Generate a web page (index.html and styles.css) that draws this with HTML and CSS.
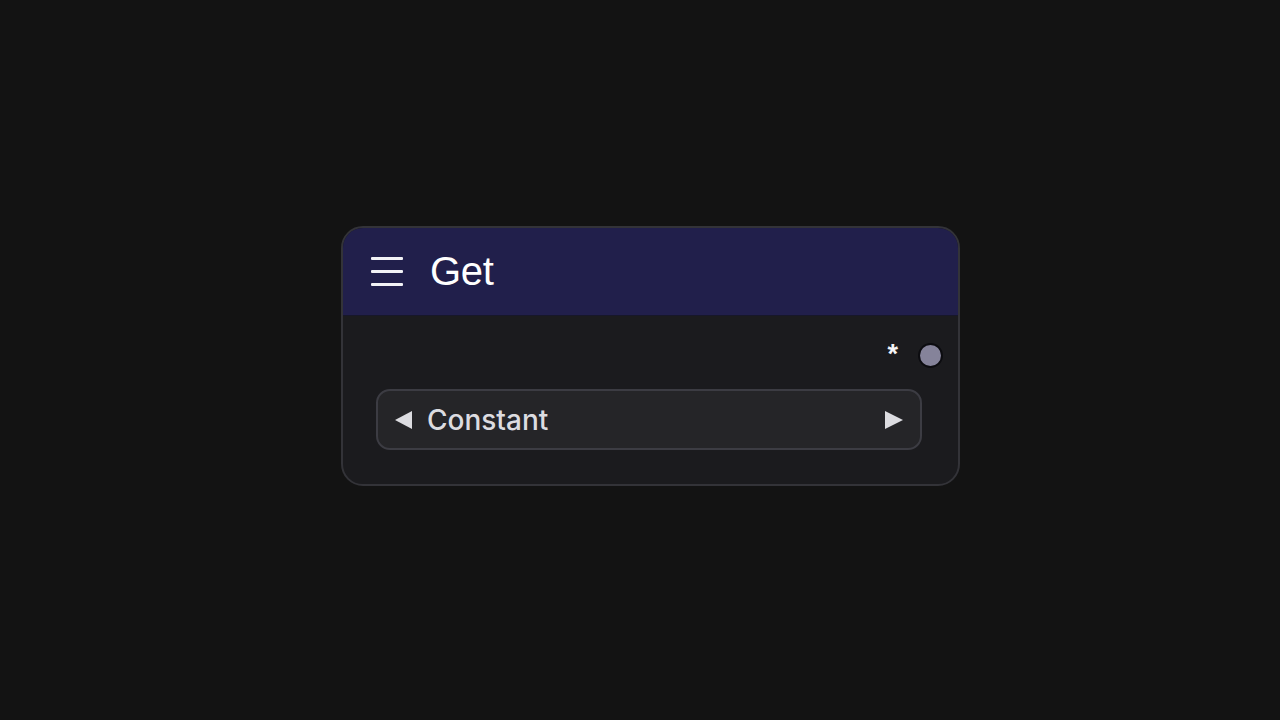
FILE: index.html
```html
<!DOCTYPE html>
<html lang="en">
<head>
  <meta charset="UTF-8">
  <meta name="viewport" content="width=device-width, initial-scale=1.0">
  <title>Get Node</title>
  <link rel="stylesheet" href="styles.css">
</head>
<body>
  <div class="node">
    <div class="node-header">
      <div class="menu-icon">
        <span></span>
        <span></span>
        <span></span>
      </div>
      <h1>Get</h1>
    </div>
    <div class="node-body">
      <div class="output-row">
        <span class="output-label">*</span>
        <span class="socket"></span>
      </div>
      <div class="select">
        <span class="arrow arrow-left"></span>
        <span class="select-value">Constant</span>
        <span class="arrow arrow-right"></span>
      </div>
    </div>
  </div>
</body>
</html>
```

FILE: styles.css
```css
body {
  font-family: "Liberation Sans", Arial, sans-serif;
  margin: 0;
  padding: 226px 0 0 341px;
  background-color: #131313;
  height: 100vh;
  box-sizing: border-box;
}

.node {
  width: 619px;
  height: 260px;
  box-sizing: border-box;
  border: 2px solid #333338;
  border-radius: 22px;
  background-color: #1b1b1e;
  overflow: hidden;
  display: flex;
  flex-direction: column;
}

.node-header {
  height: 88px;
  box-sizing: border-box;
  background-color: #211f4b;
  border-bottom: 1px solid #17172a;
  display: flex;
  align-items: center;
  padding-left: 28px;
  gap: 27px;
}

.menu-icon {
  width: 32px;
  display: flex;
  flex-direction: column;
  gap: 10px;
}

.menu-icon span {
  display: block;
  height: 3px;
  background-color: #f2f2f6;
  border-radius: 1px;
}

h1 {
  margin: 0;
  font-size: 40px;
  font-weight: normal;
  color: #ffffff;
  letter-spacing: -0.3px;
}

.node-body {
  flex: 1;
  padding: 24px 36px 0 33px;
}

.output-row {
  display: flex;
  justify-content: flex-end;
  align-items: center;
  gap: 20px;
  margin-right: -21px;
  height: 32px;
}

.output-label {
  font-size: 27px;
  font-weight: bold;
  color: #f4f4f6;
  line-height: 1;
  margin-top: -3px;
}

.socket {
  width: 21px;
  height: 21px;
  border-radius: 50%;
  background-color: #85839a;
  border: 2px solid #0c0c10;
  margin-top: -2px;
}

.select {
  margin-top: 17px;
  height: 61px;
  box-sizing: border-box;
  border: 2px solid #3c3c43;
  border-radius: 14px;
  background-color: #252528;
  display: flex;
  align-items: center;
  padding: 0 17px;
}

.select-value {
  flex: 1;
  font-family: Inter, "Noto Sans", sans-serif;
  font-size: 28px;
  font-weight: 500;
  color: #dcdce0;
  margin-left: 15px;
}

.arrow {
  width: 0;
  height: 0;
  border-top: 9px solid transparent;
  border-bottom: 9px solid transparent;
}

.arrow-left {
  border-right: 17px solid #dcdce0;
}

.arrow-right {
  border-left: 18px solid #dcdce0;
}
```
